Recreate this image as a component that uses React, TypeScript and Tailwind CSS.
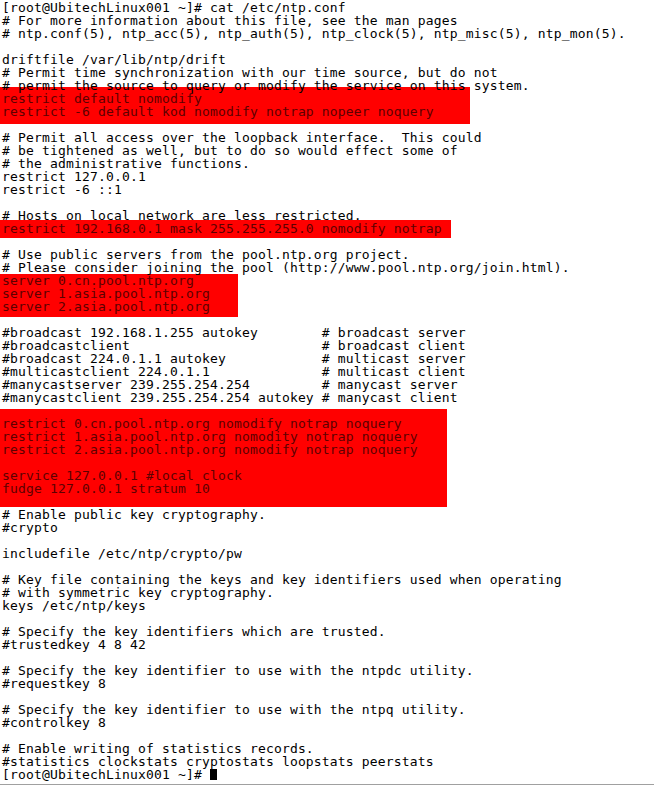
type Line = string

type Block = {
  lines: Line[]
  mark?: string
}

const blocks: Block[] = [
  {
    lines: [
      '[root@UbitechLinux001 ~]# cat /etc/ntp.conf',
      '# For more information about this file, see the man pages',
      '# ntp.conf(5), ntp_acc(5), ntp_auth(5), ntp_clock(5), ntp_misc(5), ntp_mon(5).',
      '',
      'driftfile /var/lib/ntp/drift',
      '# Permit time synchronization with our time source, but do not',
      '# permit the source to query or modify the service on this system.',
    ],
  },
  {
    mark: 'w-[470px] -mt-[5px] pt-[5px] -mb-[6px] pb-[6px]',
    lines: [
      'restrict default nomodify',
      'restrict -6 default kod nomodify notrap nopeer noquery',
    ],
  },
  {
    lines: [
      '',
      '# Permit all access over the loopback interface.  This could',
      '# be tightened as well, but to do so would effect some of',
      '# the administrative functions.',
      'restrict 127.0.0.1',
      'restrict -6 ::1',
      '',
      '# Hosts on local network are less restricted.',
    ],
  },
  {
    mark: 'w-[451px] -mt-[2px] pt-[2px] -mb-[3px] pb-[3px]',
    lines: ['restrict 192.168.0.1 mask 255.255.255.0 nomodify notrap'],
  },
  {
    lines: [
      '',
      '# Use public servers from the pool.ntp.org project.',
      '# Please consider joining the pool (http://www.pool.ntp.org/join.html).',
    ],
  },
  {
    mark: 'w-[238px] -mb-[4px] pb-[4px]',
    lines: [
      'server 0.cn.pool.ntp.org',
      'server 1.asia.pool.ntp.org',
      'server 2.asia.pool.ntp.org',
    ],
  },
  {
    lines: [
      '',
      '#broadcast 192.168.1.255 autokey        # broadcast server',
      '#broadcastclient                        # broadcast client',
      '#broadcast 224.0.1.1 autokey            # multicast server',
      '#multicastclient 224.0.1.1              # multicast client',
      '#manycastserver 239.255.254.254         # manycast server',
      '#manycastclient 239.255.254.254 autokey # manycast client',
      '',
    ],
  },
  {
    mark: 'w-[447px] -mt-[8px] pt-[8px] -mb-[12px] pb-[12px]',
    lines: [
      'restrict 0.cn.pool.ntp.org nomodify notrap noquery',
      'restrict 1.asia.pool.ntp.org nomodity notrap noquery',
      'restrict 2.asia.pool.ntp.org nomodify notrap noquery',
      '',
      'service 127.0.0.1 #local clock',
      'fudge 127.0.0.1 stratum 10',
    ],
  },
  {
    lines: [
      '',
      '# Enable public key cryptography.',
      '#crypto',
      '',
      'includefile /etc/ntp/crypto/pw',
      '',
      '# Key file containing the keys and key identifiers used when operating',
      '# with symmetric key cryptography.',
      'keys /etc/ntp/keys',
      '',
      '# Specify the key identifiers which are trusted.',
      '#trustedkey 4 8 42',
      '',
      '# Specify the key identifier to use with the ntpdc utility.',
      '#requestkey 8',
      '',
      '# Specify the key identifier to use with the ntpq utility.',
      '#controlkey 8',
      '',
      '# Enable writing of statistics records.',
      '#statistics clockstats cryptostats loopstats peerstats',
    ],
  },
]

export default function App() {
  return (
    <div
      className="w-[654px] h-[787px] bg-white flex flex-col overflow-hidden text-[13px] leading-[13px] tracking-[0.17px] text-black"
      style={{ fontFamily: '"DejaVu Sans Mono", "Liberation Mono", monospace' }}
    >
      <div className="pt-[1px] pl-[2px]">
        {blocks.map((block, i) => (
          <div
            key={i}
            className={block.mark ? 'bg-[#ff0000] text-[#5c0000] -ml-[2px] pl-[2px] ' + block.mark : ''}
          >
            {block.lines.map((line, j) => (
              <div key={j} className="h-[13px] whitespace-pre">{line}</div>
            ))}
          </div>
        ))}
        <div className="h-[13px] whitespace-pre flex items-center">
          <span>{'[root@UbitechLinux001 ~]# '}</span>
          <span className="inline-block w-[7px] h-[11px] bg-black" />
        </div>
      </div>
      <div className="mt-[3px] h-px bg-[#a0a0a0]" />
    </div>
  )
}
